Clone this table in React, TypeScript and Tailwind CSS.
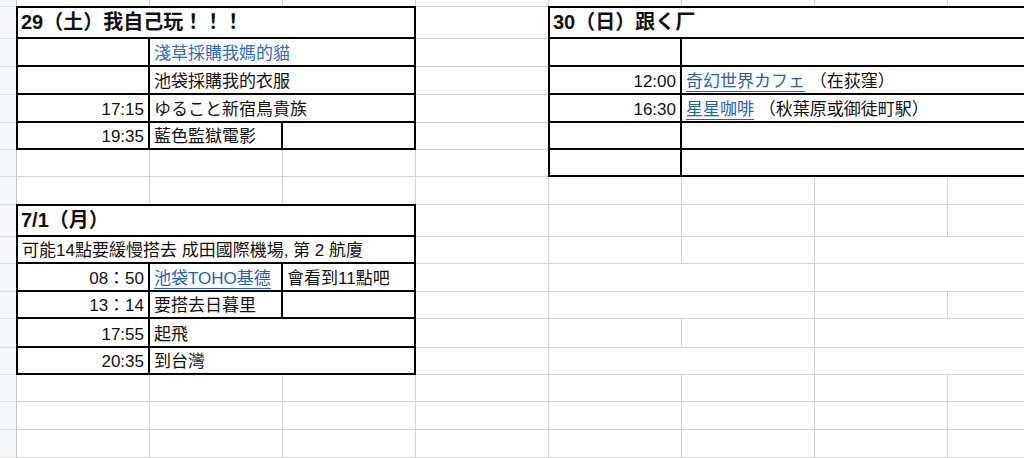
import type { ReactNode } from "react";

const font = "font-['Liberation_Sans','Noto_Sans_CJK_TC',sans-serif]";

function Gray({ span = "" }: { span?: string }) {
  return <div className={`border-r border-b border-[#d3d3d3] bg-white ${span}`} />;
}

function Head() {
  return <div className="border-r border-b border-r-[#c4c4c4] border-b-[#e0e0e0] bg-[#f6f7f8]" />;
}

function Cell({ children, className = "" }: { children?: ReactNode; className?: string }) {
  return (
    <div className={`flex items-end overflow-hidden whitespace-nowrap px-[4px] pb-[1px] text-[17px] leading-[20px] ${className}`}>
      {children}
    </div>
  );
}

function Title({ children }: { children: ReactNode }) {
  return (
    <div className="flex h-[31px] shrink-0 items-end border-b-2 border-black px-[3px] pb-[3px] text-[20px] leading-[24px] font-bold">
      {children}
    </div>
  );
}

function Row({ h, last = false, children }: { h: string; last?: boolean; children: ReactNode }) {
  return <div className={`flex shrink-0 ${h} ${last ? "" : "border-b-2 border-black"}`}>{children}</div>;
}

const box = "z-10 -ml-px -mt-px flex flex-col border-2 border-black bg-white text-[#111] [text-spacing-trim:space-all]";
const link = "text-[#2160c4] underline underline-offset-[4px] decoration-[1px]";

function Day29() {
  return (
    <div className={`col-span-3 row-span-5 ${box}`}>
      <Title>29（土）我自己玩！！！</Title>
      <Row h="h-[28px]">
        <Cell className="w-[132px] border-r-2 border-black" />
        <Cell className="flex-1">
          <span className="text-[#2f69c6]">淺草採購我媽的貓</span>
        </Cell>
      </Row>
      <Row h="h-[28px]">
        <Cell className="w-[132px] border-r-2 border-black" />
        <Cell className="flex-1">池袋採購我的衣服</Cell>
      </Row>
      <Row h="h-[28px]">
        <Cell className="w-[132px] justify-end border-r-2 border-black">17:15</Cell>
        <Cell className="flex-1">ゆること新宿鳥貴族</Cell>
      </Row>
      <Row h="h-[25px]" last>
        <Cell className="w-[132px] justify-end border-r-2 border-black">19:35</Cell>
        <Cell className="w-[133px] border-r-2 border-black">藍色監獄電影</Cell>
        <Cell className="flex-1" />
      </Row>
    </div>
  );
}

function Day30() {
  return (
    <div className={`col-span-4 row-span-6 ${box}`}>
      <Title>30（日）跟く厂</Title>
      <Row h="h-[28px]">
        <Cell className="w-[132px] border-r-2 border-black" />
        <Cell className="flex-1" />
      </Row>
      <Row h="h-[28px]">
        <Cell className="w-[132px] justify-end border-r-2 border-black">12:00</Cell>
        <Cell className="flex-1">
          <span className={link}>奇幻世界カフェ</span>
          <span className="whitespace-pre"> （在荻窪）</span>
        </Cell>
      </Row>
      <Row h="h-[28px]">
        <Cell className="w-[132px] justify-end border-r-2 border-black">16:30</Cell>
        <Cell className="flex-1">
          <span className={link}>星星咖啡</span>
          <span className="whitespace-pre"> （秋葉原或御徒町駅）</span>
        </Cell>
      </Row>
      <Row h="h-[27px]">
        <Cell className="w-[132px] border-r-2 border-black" />
        <Cell className="flex-1" />
      </Row>
      <Row h="h-[25px]" last>
        <Cell className="w-[132px] border-r-2 border-black" />
        <Cell className="flex-1" />
      </Row>
    </div>
  );
}

function Day71() {
  return (
    <div className={`col-span-3 row-span-6 ${box}`}>
      <Title>7/1（月）</Title>
      <Row h="h-[27px]">
        <Cell className="flex-1">可能14點要緩慢搭去 成田國際機場, 第 2 航廈</Cell>
      </Row>
      <Row h="h-[28px]">
        <Cell className="w-[132px] justify-end border-r-2 border-black">08：50</Cell>
        <Cell className="w-[133px] border-r-2 border-black">
          <span className={link}>池袋TOHO基德</span>
        </Cell>
        <Cell className="flex-1">會看到11點吧</Cell>
      </Row>
      <Row h="h-[27px]">
        <Cell className="w-[132px] justify-end border-r-2 border-black">13：14</Cell>
        <Cell className="w-[133px] border-r-2 border-black">要搭去日暮里</Cell>
        <Cell className="flex-1" />
      </Row>
      <Row h="h-[29px]">
        <Cell className="w-[132px] justify-end border-r-2 border-black">17:55</Cell>
        <Cell className="flex-1">起飛</Cell>
      </Row>
      <Row h="h-[25px]" last>
        <Cell className="w-[132px] justify-end border-r-2 border-black">20:35</Cell>
        <Cell className="flex-1">到台灣</Cell>
      </Row>
    </div>
  );
}

function FullRow() {
  return (
    <>
      <Head />
      {[0, 1, 2, 3, 4, 5, 6, 7].map((i) => (
        <Gray key={i} />
      ))}
    </>
  );
}

export default function App() {
  return (
    <div className={`h-[458px] w-[1024px] overflow-hidden bg-white ${font}`}>
      <div className="grid w-[1081px] grid-cols-[17px_repeat(8,133px)] grid-rows-[7px_32px_28px_28px_28px_27px_27px_28px_32px_27px_28px_27px_29px_27px_27px_28px_28px]">
        {/* row 0 */}
        <FullRow />

        {/* rows 1-5: 29 box, D column, 30 box */}
        <Head />
        <Day29 />
        <Gray />
        <Day30 />
        {[0, 1, 2, 3].map((i) => (
          <div key={i} className="contents">
            <Head />
            <Gray />
          </div>
        ))}

        {/* row 6 */}
        <Head />
        <Gray />
        <Gray />
        <Gray />
        <Gray />

        {/* row 7 */}
        <FullRow />

        {/* row 8: 7/1 box starts */}
        <Head />
        <Day71 />
        <Gray />
        <Gray />
        <Gray />
        <Gray />
        <Gray />

        {/* row 9 */}
        <Head />
        <Gray />
        <Gray />
        <Gray />
        <Gray span="col-span-2" />

        {/* row 10 */}
        <Head />
        <Gray />
        <Gray span="col-span-2" />
        <Gray span="col-span-2" />

        {/* row 11 */}
        <Head />
        <Gray />
        <Gray span="col-span-2" />
        <Gray />
        <Gray />

        {/* row 12 */}
        <Head />
        <Gray />
        <Gray />
        <Gray />
        <Gray span="col-span-2" />

        {/* row 13 */}
        <Head />
        <Gray />
        <Gray span="col-span-2" />
        <Gray span="col-span-2" />

        {/* rows 14-16 */}
        <FullRow />
        <FullRow />
        <FullRow />
      </div>
    </div>
  );
}
